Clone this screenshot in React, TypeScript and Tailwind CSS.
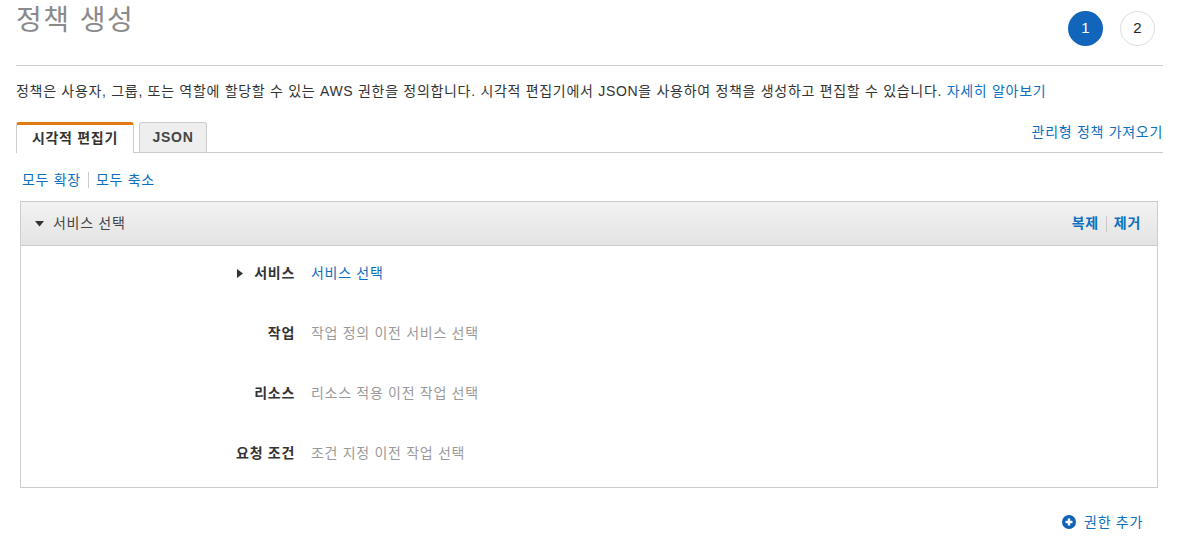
import React from "react";

const font = { fontFamily: '"Liberation Sans", "Noto Sans CJK KR", sans-serif' };

const rows = [
  { label: "서비스", value: "서비스 선택", link: true, caret: true },
  { label: "작업", value: "작업 정의 이전 서비스 선택" },
  { label: "리소스", value: "리소스 적용 이전 작업 선택" },
  { label: "요청 조건", value: "조건 지정 이전 작업 선택" },
];

const PlusCircle = () => (
  <svg width="14" height="14" viewBox="0 0 14 14">
    <circle cx="7" cy="7" r="7" fill="#0f62b6" />
    <rect x="3.5" y="5.8" width="7" height="2.4" fill="#fff" />
    <rect x="5.8" y="3.5" width="2.4" height="7" fill="#fff" />
  </svg>
);

export default function App() {
  return (
    <div className="min-h-[547px] bg-white pl-4 pr-[30px] text-[14px] tracking-[0.7px] text-[#444]" style={font}>
      {/* header */}
      <div className="flex h-[66px] justify-between border-b border-[#cfcfcf]">
        <h1 className="pt-[1px] text-[28px] leading-[40px] tracking-[1.5px] text-[#8a8a8a]">정책 생성</h1>
        <div className="mr-2 flex gap-[17px] pt-[11px] tracking-normal">
          <div className="flex h-[35px] w-[35px] items-center justify-center rounded-full bg-[#1166bb] text-[15px] text-white">1</div>
          <div className="flex h-[35px] w-[35px] items-center justify-center rounded-full border border-[#ddd] text-[15px] text-[#222]">2</div>
        </div>
      </div>

      <p className="mt-[15px] leading-[20px] text-[#333]">
        정책은 사용자, 그룹, 또는 역할에 할당할 수 있는 AWS 권한을 정의합니다. 시각적 편집기에서 JSON을 사용하여 정책을 생성하고 편집할 수 있습니다.{" "}
        <a className="text-[#0d6fc0]">자세히 알아보기</a>
      </p>

      {/* tabs */}
      <div className="mt-[21px] flex items-end border-b border-[#ccc]">
        <div className="-mb-px flex h-[31px] w-[118px] items-center justify-center rounded-t-[3px] border-x border-t-[3px] border-x-[#ccc] border-t-[#e47911] bg-white pb-[1px] font-bold text-[#333]">
          시각적 편집기
        </div>
        <div className="ml-[5px] flex h-[30px] w-[68px] items-center justify-center rounded-t-[3px] border-x border-t border-[#ccc] bg-[#eee] font-bold text-[#444]">
          JSON
        </div>
        <a className="mb-[10px] ml-auto leading-[20px] text-[#0d6fc0]">관리형 정책 가져오기</a>
      </div>

      <div className="mt-[17px] flex items-center pl-[6px] leading-[20px] text-[#0d6fc0]">
        <a>모두 확장</a>
        <span className="mx-[7px] h-[16px] w-px bg-[#ccc]" />
        <a>모두 축소</a>
      </div>

      {/* panel */}
      <div className="ml-[4px] mr-[5px] mt-[11px] border border-[#ccc]">
        <div className="flex h-[44px] items-center justify-between border-b border-[#ccc] bg-gradient-to-b from-[#f2f2f2] to-[#e4e4e4] pl-[14px] pr-[16px]">
          <div className="flex items-center">
            <svg width="9" height="6" viewBox="0 0 9 6" className="mr-[9px]">
              <path d="M0 0 L9 0 L4.5 5.5 Z" fill="#333" />
            </svg>
            <span className="text-[#444]">서비스 선택</span>
          </div>
          <div className="flex items-center font-bold text-[#0d6fc0]">
            <a>복제</a>
            <span className="mx-[7px] h-[16px] w-px bg-[#c8c8c8]" />
            <a>제거</a>
          </div>
        </div>
        <div className="flex flex-col gap-[40px] pb-[24px] pt-[17px]">
          {rows.map((r) => (
            <div key={r.label} className="flex leading-[20px]">
              <div className="flex w-[274px] items-center justify-end font-bold text-[#333]">
                {r.caret && (
                  <svg width="6" height="9" viewBox="0 0 6 9" className="mr-[11px]">
                    <path d="M0 0 L6 4.5 L0 9 Z" fill="#333" />
                  </svg>
                )}
                {r.label}
              </div>
              <div className={"ml-[16px] " + (r.link ? "text-[#0d6fc0]" : "text-[#9a9a9a]")}>{r.value}</div>
            </div>
          ))}
        </div>
      </div>

      <div className="mt-[24px] flex justify-end pr-[20px]">
        <a className="flex items-center gap-[8px] leading-[20px] text-[#0d6fc0]">
          <PlusCircle />
          권한 추가
        </a>
      </div>
    </div>
  );
}
